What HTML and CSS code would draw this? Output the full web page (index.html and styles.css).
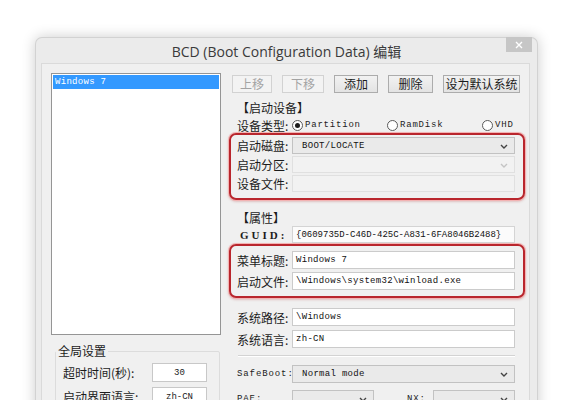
FILE: index.html
```html
<!DOCTYPE html>
<html lang="zh-CN">

<head>
    <meta charset="UTF-8" />
    <meta name="viewport" content="width=device-width, initial-scale=1.0" />
    <title>BCD 编辑</title>
    <link rel="stylesheet" href="styles.css">
</head>

<body>
    <div class="window">
        <div class="titlebar">
            <span class="title">BCD (Boot Configuration Data) 编辑</span>
            <span class="close">
                <svg width="8" height="8" viewBox="0 0 8 8"><path d="M1 1L7 7M7 1L1 7" stroke="#fff" stroke-width="1.4" fill="none" /></svg>
            </span>
        </div>

        <div class="client">
            <!-- 左侧: 系统列表 + 全局设置 -->
            <div class="side">
                <div class="listbox">
                    <div class="item sel">Windows 7</div>
                </div>
                <fieldset class="global">
                    <legend>全局设置</legend>
                    <div class="grow"><span class="glabel">超时时间(秒):</span><span class="num">30</span></div>
                    <div class="grow"><span class="glabel">启动界面语言:</span><span class="num">zh-CN</span></div>
                </fieldset>
            </div>

            <!-- 右侧: 编辑区 -->
            <div class="main">
                <div class="btns">
                    <button class="btn w40" disabled>上移</button>
                    <button class="btn w42" disabled>下移</button>
                    <button class="btn w44">添加</button>
                    <button class="btn w45">删除</button>
                    <button class="btn w77">设为默认系统</button>
                </div>

                <div class="gtitle first">【启动设备】</div>
                <div class="row radios">
                    <span class="label">设备类型:</span>
                    <span class="radio on"><i></i>Partition</span>
                    <span class="radio"><i></i>RamDisk</span>
                    <span class="radio last"><i></i>VHD</span>
                </div>

                <div class="mark mark1">
                    <div class="row">
                        <span class="label">启动磁盘:</span>
                        <span class="field combo">BOOT/LOCATE<svg class="chev" width="8" height="5" viewBox="0 0 8 5"><path d="M1 1L4 4L7 1" stroke="#444" stroke-width="1.4" fill="none" /></svg></span>
                    </div>
                    <div class="row">
                        <span class="label">启动分区:</span>
                        <span class="field combo off"><svg class="chev" width="8" height="5" viewBox="0 0 8 5"><path d="M1 1L4 4L7 1" stroke="#c4c4c4" stroke-width="1.4" fill="none" /></svg></span>
                    </div>
                    <div class="row">
                        <span class="label">设备文件:</span>
                        <span class="field off"></span>
                    </div>
                </div>

                <div class="gtitle">【属性】</div>
                <div class="row">
                    <span class="label guid">GUID:</span>
                    <span class="field soft">{0609735D-C46D-425C-A831-6FA8046B2488}</span>
                </div>

                <div class="mark mark2">
                    <div class="row">
                        <span class="label">菜单标题:</span>
                        <span class="field">Windows 7</span>
                    </div>
                    <div class="row">
                        <span class="label">启动文件:</span>
                        <span class="field">\Windows\system32\winload.exe</span>
                    </div>
                </div>

                <div class="row tall path">
                    <span class="label">系统路径:</span>
                    <span class="field">\Windows</span>
                </div>
                <div class="row tall lang">
                    <span class="label">系统语言:</span>
                    <span class="field">zh-CN</span>
                </div>

                <div class="sep"></div>

                <div class="row tall safe">
                    <span class="label mono">SafeBoot:</span>
                    <span class="field combo">Normal mode<svg class="chev" width="8" height="5" viewBox="0 0 8 5"><path d="M1 1L4 4L7 1" stroke="#444" stroke-width="1.4" fill="none" /></svg></span>
                </div>
                <div class="row tall pae">
                    <span class="label mono">PAE:</span>
                    <span class="field combo short"><svg class="chev" width="8" height="5" viewBox="0 0 8 5"><path d="M1 1L4 4L7 1" stroke="#444" stroke-width="1.4" fill="none" /></svg></span>
                    <span class="label mono nx">NX:</span>
                    <span class="field combo"><svg class="chev" width="8" height="5" viewBox="0 0 8 5"><path d="M1 1L4 4L7 1" stroke="#444" stroke-width="1.4" fill="none" /></svg></span>
                </div>
            </div>
        </div>
    </div>
</body>

</html>
```

FILE: styles.css
```css
body {
    margin: 0;
    background: #fff;
    font-family: "Noto Sans CJK SC", sans-serif;
    font-size: 12px;
    color: #1c1c1c;
    overflow: hidden;
}

.window {
    margin: 37px 0 0 35px;
    width: 503px;
    height: 380px;
    box-sizing: border-box;
    background: #ebebeb;
    border: 1px solid #d2d2d2;
    border-bottom: none;
    border-radius: 7px 7px 0 0;
    box-shadow: 0 0 14px rgba(0, 0, 0, 0.2);
}

.titlebar {
    height: 25px;
    display: flex;
    align-items: center;
    justify-content: center;
    position: relative;
}

.title {
    font-family: "Open Sans", "Noto Sans CJK SC", sans-serif;
    font-size: 14px;
    color: #3a3a3a;
}

.close {
    position: absolute;
    top: -1px;
    right: 5px;
    width: 26px;
    height: 15px;
    background: #c6c6c6;
    display: flex;
    align-items: center;
    justify-content: center;
}

.client {
    margin: 0 7px 0 5px;
    height: 345px;
    background: #f0f0f0;
    border: 1px solid #dadada;
    border-bottom: none;
    padding: 9px 4px 0 9px;
    display: flex;
    gap: 7px;
}

/* 左侧 */
.side {
    width: 170px;
}

.listbox {
    height: 262px;
    box-sizing: border-box;
    border: 1px solid #959595;
    background: #fff;
}

.item {
    margin: 1px;
    height: 14px;
    line-height: 14px;
    padding-left: 2px;
    font-family: "Liberation Mono", monospace;
    font-size: 9px;
    letter-spacing: 0.3px;
}

.item.sel {
    background: #3399ff;
    color: #fff;
}

.global {
    margin: 9px 1px 0 4px;
    padding: 0 0 10px 0;
    border: 1px solid #dcdcdc;
    border-radius: 2px;
}

.global legend {
    padding: 0 2px;
    line-height: 14px;
}

.grow {
    display: flex;
    align-items: center;
    height: 19px;
    margin-top: 5px;
    padding-left: 7px;
}

.glabel {
    width: 89px;
}

.num {
    width: 55px;
    height: 19px;
    box-sizing: border-box;
    border: 1px solid #c8c8c8;
    background: #fff;
    font-family: "Liberation Mono", monospace;
    font-size: 9px;
    display: flex;
    align-items: center;
    justify-content: center;
}

/* 右侧 */
.main {
    width: 297px;
}

.btns {
    display: flex;
    gap: 10px;
    margin: 2px 0 0 4px;
}

.btn {
    height: 18px;
    padding: 0;
    font-family: "Noto Sans CJK SC", sans-serif;
    font-size: 12px;
    line-height: 16px;
    color: #1c1c1c;
    background: linear-gradient(#f2f2f2, #e3e3e3);
    border: 1px solid #acacac;
}

.btn:disabled {
    color: #a3a3a3;
    border-color: #d2d2d2;
    background: #f3f3f3;
}

.w40 { width: 40px; }
.w42 { width: 42px; }
.w44 { width: 44px; }
.w45 { width: 45px; }
.w77 { width: 77px; }

.gtitle {
    line-height: 16px;
    margin-top: 10px;
    padding-left: 9px;
}

.gtitle.first {
    margin-top: 7px;
}

.row {
    display: flex;
    align-items: center;
    height: 17px;
    padding: 0 10px 0 9px;
}

.row.tall {
    height: 18px;
}

.label {
    width: 55px;
    flex-shrink: 0;
}

.label.guid {
    font-family: "Liberation Serif", serif;
    font-weight: bold;
    font-size: 11px;
    letter-spacing: 3px;
    padding-left: 3px;
    box-sizing: border-box;
}

.label.mono {
    font-family: "Liberation Mono", monospace;
    font-size: 9px;
    letter-spacing: 0.9px;
}

.field {
    flex: 1;
    height: 100%;
    box-sizing: border-box;
    border: 1px solid #cbcbcb;
    background: #fff;
    padding-left: 3px;
    font-family: "Liberation Mono", monospace;
    font-size: 9px;
    letter-spacing: 0.3px;
    color: #111;
    display: flex;
    align-items: center;
    position: relative;
}

.field.soft {
    background: #fbfbfb;
    border-color: #d4d4d4;
    letter-spacing: 0;
}

.field.combo {
    background: #eaeaea;
    border-color: #c2c2c2;
    padding-left: 9px;
}

.field.off {
    background: #f2f2f2;
    border-color: #e0e0e0;
}

.field.short {
    flex: 0 0 82px;
}

.chev {
    position: absolute;
    right: 6px;
    top: 6px;
}

.radios {
    height: 16px;
    margin-top: 1px;
}

.radio {
    display: flex;
    align-items: center;
    flex: 0 0 95px;
    font-family: "Liberation Mono", monospace;
    font-size: 9px;
    letter-spacing: 0.8px;
}

.radio:first-of-type {
    margin-left: 3px;
}

.radio.last {
    flex: 0 0 auto;
}

.radio i {
    width: 11px;
    height: 11px;
    box-sizing: border-box;
    border: 1px solid #5a5a5a;
    border-radius: 50%;
    background: #fff;
    margin-right: 2px;
    display: flex;
    align-items: center;
    justify-content: center;
}

.radio.on i::after {
    content: "";
    width: 5px;
    height: 5px;
    border-radius: 50%;
    background: #1c1c1c;
}

/* 红色标注框 */
.mark {
    margin-left: 1px;
    border: 2px solid #b9262d;
    border-radius: 7px;
    box-shadow: 0 0 0 1px #f3b3b3, 0 1px 3px rgba(160, 30, 30, 0.45);
    display: flex;
    flex-direction: column;
}

.mark .row {
    padding: 0 8px 0 6px;
}

.mark1 {
    margin-top: 0;
    padding: 2px 0 6px;
    gap: 2px;
}

.mark2 {
    margin-top: 1px;
    padding: 5px 0 6px;
    gap: 3px;
}

.mark2 .row {
    height: 18px;
}

.path {
    margin-top: 10px;
}

.lang {
    margin-top: 4px;
}

.sep {
    margin: 7px 10px 0 10px;
    border-top: 1px solid #d3d3d3;
    border-bottom: 1px solid #fff;
}

.safe {
    margin-top: 8px;
}

.pae {
    margin-top: 7px;
}

.label.nx {
    width: 59px;
    padding-left: 33px;
    box-sizing: border-box;
}
```
